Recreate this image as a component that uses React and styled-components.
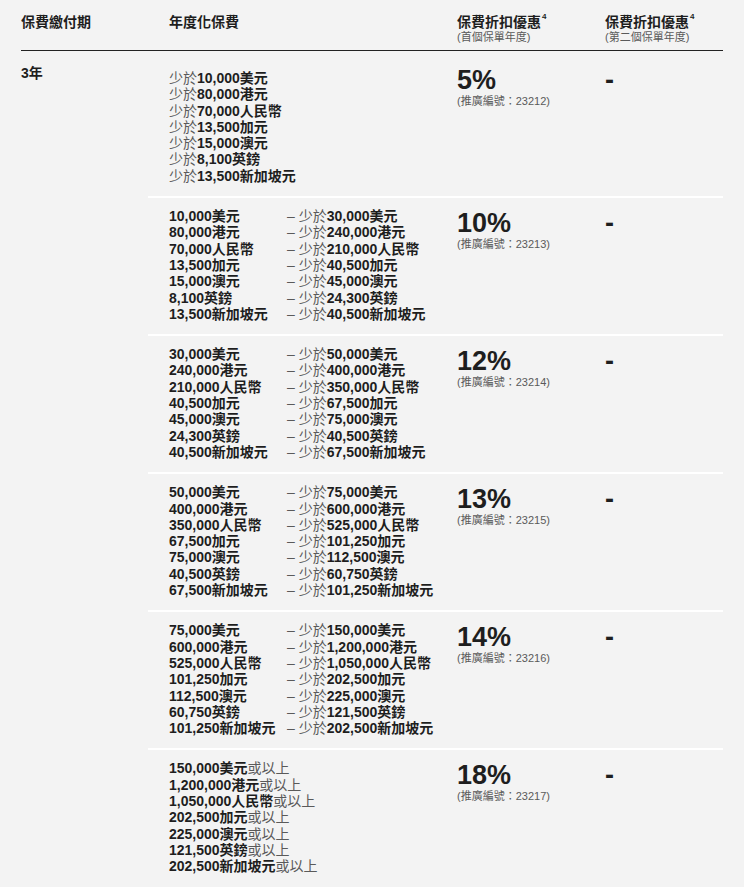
import React from 'react'
import styled, { createGlobalStyle } from 'styled-components'

//
// Size and colour variables
//
const vars = {
  gutter: '21px',
  text: '#1e1e1e',
  muted: '#5a5a5a',
  bg: '#f3f3f3',
  lineHeight: '16.3px',
  columns: '288px 148px 1fr'
}

const GlobalStyle = createGlobalStyle`
  html, body {
    margin: 0;
    padding: 0;
    background: ${vars.bg};
  }
  body {
    font-family: "Liberation Sans", Arial, "Noto Sans CJK TC", sans-serif;
    color: ${vars.text};
  }
`

const Page = styled.div`
  padding: 0 ${vars.gutter};
  width: 702px;
`

const Header = styled.div`
  display: grid;
  grid-template-columns: 127px ${vars.columns};
  border-bottom: 1px solid #222222;
  padding: 14px 0 6px;
`

const HeadCell = styled.div`
  padding-left: ${({ first }) => (first ? '0' : vars.gutter)};
`

const HeadTitle = styled.div`
  font-size: 14px;
  line-height: 17px;
  font-weight: 700;

  & sup {
    font-size: 8px;
    line-height: 0;
    vertical-align: top;
    position: relative;
    top: 3px;
    margin-left: 1px;
  }
`

const HeadSub = styled.div`
  font-size: 11px;
  line-height: 13px;
  color: ${vars.muted};
`

const Body = styled.div`
  display: flex;
`

const Term = styled.div`
  width: 127px;
  flex: none;
  padding-top: 14px;
  font-size: 14px;
  line-height: ${vars.lineHeight};
  font-weight: 700;
`

const Tiers = styled.div`
  flex: 1;
  display: flex;
  flex-direction: column;
`

const Tier = styled.div`
  display: grid;
  grid-template-columns: ${vars.columns};
  border-top: ${({ first }) => (first ? 'none' : '2px solid #ffffff')};
  padding: ${({ first }) => (first ? '14px' : '10px')} 0 12px;
`

const Cell = styled.div`
  padding-left: ${vars.gutter};
`

const Ranges = styled(Cell)`
  display: grid;
  grid-template-columns: ${({ split }) => (split ? '118px auto' : 'auto')};
  font-size: 14px;
  line-height: ${vars.lineHeight};
  font-weight: 700;
  ${({ first }) => first && 'padding-top: 5px;'}
`

const Amount = styled.div`
  white-space: nowrap;
`

const Soft = styled.span`
  font-weight: 400;
  color: ${vars.muted};
`

const Rate = styled.div`
  font-size: 27px;
  line-height: 30px;
  font-weight: 700;
`

const Code = styled.div`
  font-size: 11px;
  line-height: 13px;
  color: ${vars.muted};
`

const currencies = ['美元', '港元', '人民幣', '加元', '澳元', '英鎊', '新加坡元']

const bounds = [
  [10000, 30000, 50000, 75000, 150000],
  [80000, 240000, 400000, 600000, 1200000],
  [70000, 210000, 350000, 525000, 1050000],
  [13500, 40500, 67500, 101250, 202500],
  [15000, 45000, 75000, 112500, 225000],
  [8100, 24300, 40500, 60750, 121500],
  [13500, 40500, 67500, 101250, 202500]
]

const tiers = [
  { rate: '5%', code: '23212' },
  { rate: '10%', code: '23213' },
  { rate: '12%', code: '23214' },
  { rate: '13%', code: '23215' },
  { rate: '14%', code: '23216' },
  { rate: '18%', code: '23217' }
]

const fmt = n => n.toLocaleString('en-US')

const renderRanges = i => {
  if (i === 0) {
    return currencies.map((c, k) => (
      <Amount key={k}><Soft>少於</Soft>{fmt(bounds[k][0])}{c}</Amount>
    ))
  }
  if (i === tiers.length - 1) {
    return currencies.map((c, k) => (
      <Amount key={k}>{fmt(bounds[k][4])}{c}<Soft>或以上</Soft></Amount>
    ))
  }
  return currencies.flatMap((c, k) => [
    <Amount key={`a${k}`}>{fmt(bounds[k][i - 1])}{c}</Amount>,
    <Amount key={`b${k}`}><Soft>– 少於</Soft>{fmt(bounds[k][i])}{c}</Amount>
  ])
}

const App = () => (
  <>
    <GlobalStyle />
    <Page>
      <Header>
        <HeadCell first>
          <HeadTitle>保費繳付期</HeadTitle>
        </HeadCell>
        <HeadCell>
          <HeadTitle>年度化保費</HeadTitle>
        </HeadCell>
        <HeadCell>
          <HeadTitle>保費折扣優惠<sup>4</sup></HeadTitle>
          <HeadSub>(首個保單年度)</HeadSub>
        </HeadCell>
        <HeadCell>
          <HeadTitle>保費折扣優惠<sup>4</sup></HeadTitle>
          <HeadSub>(第二個保單年度)</HeadSub>
        </HeadCell>
      </Header>
      <Body>
        <Term>3年</Term>
        <Tiers>
          {tiers.map((t, i) => (
            <Tier key={t.code} first={i === 0}>
              <Ranges split={i > 0 && i < tiers.length - 1} first={i === 0}>
                {renderRanges(i)}
              </Ranges>
              <Cell>
                <Rate>{t.rate}</Rate>
                <Code>(推廣編號：{t.code})</Code>
              </Cell>
              <Cell>
                <Rate>-</Rate>
              </Cell>
            </Tier>
          ))}
        </Tiers>
      </Body>
    </Page>
  </>
)

export default App
